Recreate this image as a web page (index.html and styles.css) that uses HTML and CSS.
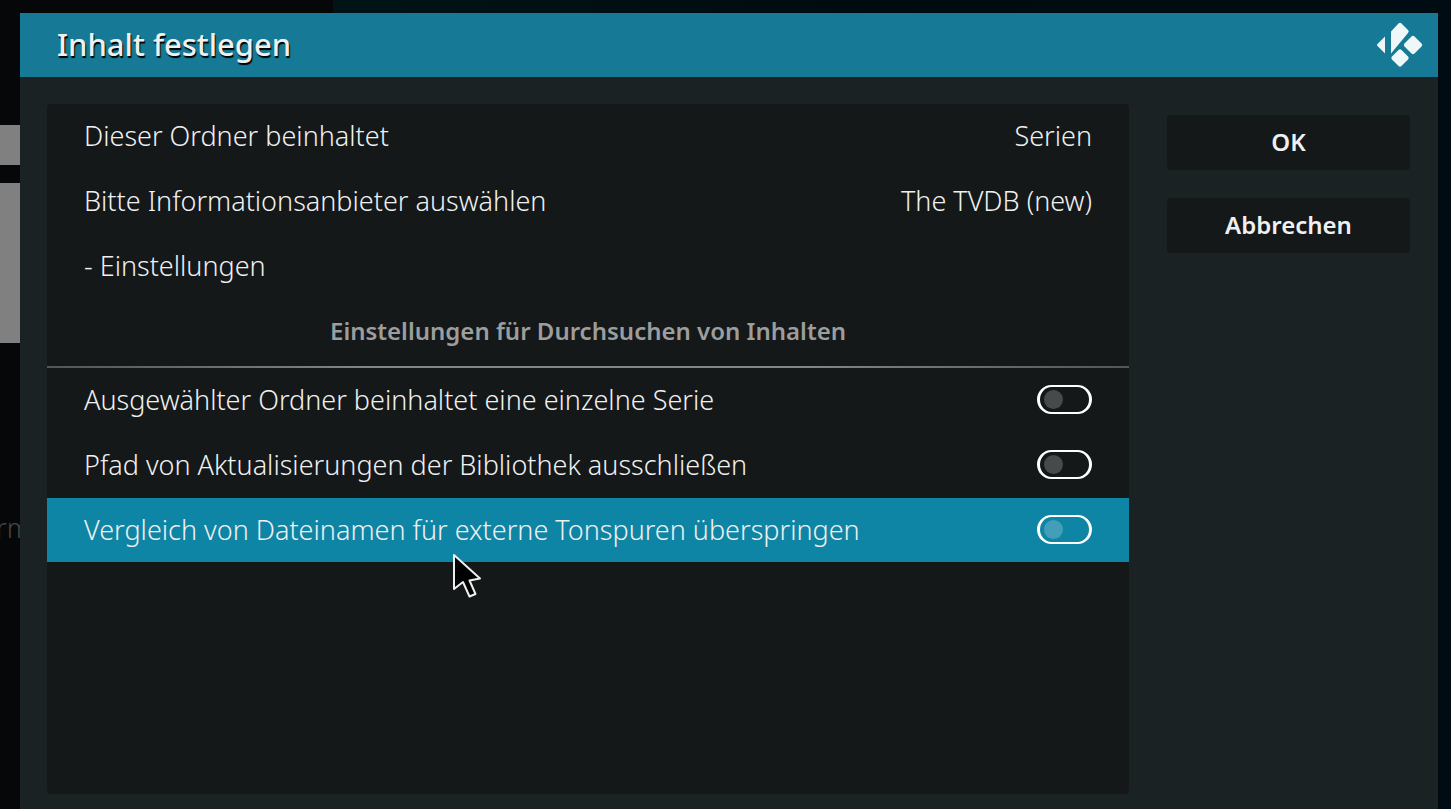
FILE: index.html
```html
<!DOCTYPE html>
<html lang="de">
<head>
    <meta charset="UTF-8">
    <meta name="viewport" content="width=device-width, initial-scale=1.0">
    <title>Inhalt festlegen</title>
    <link rel="stylesheet" href="styles.css">
</head>
<body>
    <div class="backdrop">
        <div class="tile tile-small"></div>
        <div class="tile tile-large"></div>
        <span class="backdrop-text">rm</span>
    </div>

    <div class="dialog" role="dialog" aria-labelledby="dialogTitle">
        <header class="dialog-header">
            <h1 id="dialogTitle">Inhalt festlegen</h1>
            <svg class="logo" viewBox="0 0 46 46" aria-hidden="true">
                <path d="M8 14.500V31.500L0.500 24Q-0.500 23 0.500 22Z"/>
                <path d="M14 31.500V9.500L21.500 1.500Q23 0 24.500 1.500L31 8Q32.500 9.500 31 11Z"/>
                <path d="M34.500 14.500Q36 13 37.500 14.500L44.500 21.500Q46 23 44.500 24.500L37.500 31.500Q36 33 34.500 31.500L27.500 24.500Q26 23 27.500 21.500Z"/>
                <path d="M21.500 28Q23 26.500 24.500 28L31 34.500Q32.500 36 31 37.500L24.500 44Q23 45.500 21.500 44L15 37.500Q13.500 36 15 34.500Z"/>
            </svg>
        </header>
        <form class="dialog-body">
            <div class="panel">
                <div class="group">
                    <button type="button" class="row"><span>Dieser Ordner beinhaltet</span><span>Serien</span></button>
                    <button type="button" class="row"><span>Bitte Informationsanbieter auswählen</span><span>The TVDB (new)</span></button>
                    <button type="button" class="row"><span>- Einstellungen</span></button>
                </div>
                <h2>Einstellungen für Durchsuchen von Inhalten</h2>
                <div class="group">
                    <label class="row" for="single">Ausgewählter Ordner beinhaltet eine einzelne Serie
                        <input type="checkbox" class="toggle" id="single">
                    </label>
                    <label class="row" for="exclude">Pfad von Aktualisierungen der Bibliothek ausschließen
                        <input type="checkbox" class="toggle" id="exclude">
                    </label>
                    <label class="row selected" for="skip">Vergleich von Dateinamen für externe Tonspuren überspringen
                        <input type="checkbox" class="toggle" id="skip">
                    </label>
                </div>
            </div>
            <div class="actions">
                <button type="submit" class="action">OK</button>
                <button type="button" class="action">Abbrechen</button>
            </div>
        </form>
    </div>

    <svg class="pointer" viewBox="0 0 32 48" aria-hidden="true">
        <path d="M2 3V37L11 30L17.500 44.500L23.500 42L17.500 28.500L28 26.500Z"/>
    </svg>
</body>
</html>
```
FILE: styles.css
```css
* {
    box-sizing: border-box;
}
body {
    margin: 0;
    min-height: 100vh;
    padding: 13px 13px 0 20px;
    display: flex;
    overflow: hidden;
    background: linear-gradient(to right, #050708 333px, #001417 333px, #000a11 60%, #000c13);
    color: #f0f0f0;
    font-family: "Noto Sans", sans-serif;
    font-size: 27px;
    font-weight: 300;
}
.backdrop {
    position: absolute;
    top: 0;
    left: 0;
    width: 20px;
    height: 100%;
    padding-top: 125px;
    overflow: hidden;
}
.tile {
    background-color: #808080;
}
.tile-small {
    height: 40px;
    margin-bottom: 18px;
}
.tile-large {
    height: 160px;
    margin-bottom: 168px;
}
.backdrop-text {
    display: block;
    margin-left: -4px;
    line-height: 34px;
    color: #444647;
}
.dialog {
    position: relative;
    flex: 1;
    display: flex;
    flex-direction: column;
    background-color: #1b2224;
}
.dialog-header {
    display: flex;
    align-items: center;
    justify-content: space-between;
    height: 64px;
    padding: 0 15px 0 37px;
    background-color: #167a96;
}
h1 {
    margin: 0;
    font-size: 31px;
    line-height: 62px;
    padding-bottom: 2px;
    font-weight: 500;
    text-shadow: 1px 2px 1px #000;
}
.logo {
    width: 46px;
    height: 46px;
    fill: #eff7f9;
}
.dialog-body {
    flex: 1;
    display: flex;
    gap: 38px;
    padding: 27px 28px 15px 27px;
}
.panel {
    flex: 1;
    background-color: #141819;
    border-radius: 4px;
}
.group {
    display: flex;
    flex-direction: column;
    gap: 1px;
}
.row {
    display: flex;
    align-items: center;
    justify-content: space-between;
    width: 100%;
    height: 64px;
    padding: 0 37px 2px;
    border: none;
    background: none;
    color: inherit;
    font: inherit;
    text-align: left;
    cursor: pointer;
}
.row.selected {
    background-color: #0f85a5;
}
h2 {
    margin: 0;
    height: 70px;
    border-bottom: 2px solid;
    border-image: linear-gradient(to right, #555, #858585 30%, #858585 70%, #555) 1;
    color: #9c9e9e;
    font-size: 24px;
    line-height: 66px;
    font-weight: 600;
    text-align: center;
}
.toggle {
    appearance: none;
    display: flex;
    align-items: center;
    width: 55px;
    height: 29px;
    margin: 0;
    padding-left: 4px;
    border: 2px solid #fff;
    border-width: 2px 3px;
    border-radius: 15px;
    cursor: pointer;
}
.toggle::before {
    content: "";
    width: 19px;
    height: 19px;
    border-radius: 50%;
    background-color: rgba(255, 255, 255, 0.22);
}
.toggle:checked {
    justify-content: flex-end;
    padding: 0 4px 0 0;
}
.actions {
    width: 243px;
    display: flex;
    flex-direction: column;
    gap: 28px;
    padding-top: 11px;
}
.action {
    height: 55px;
    padding: 0 0 2px;
    border: none;
    border-radius: 4px;
    background-color: #141819;
    color: inherit;
    font-family: inherit;
    font-size: 24px;
    font-weight: 600;
    cursor: pointer;
}
.pointer {
    position: absolute;
    top: 552px;
    left: 452px;
    width: 32px;
    height: 48px;
    fill: #000;
    stroke: #eee;
    stroke-width: 2;
    stroke-linejoin: round;
    pointer-events: none;
}
```
